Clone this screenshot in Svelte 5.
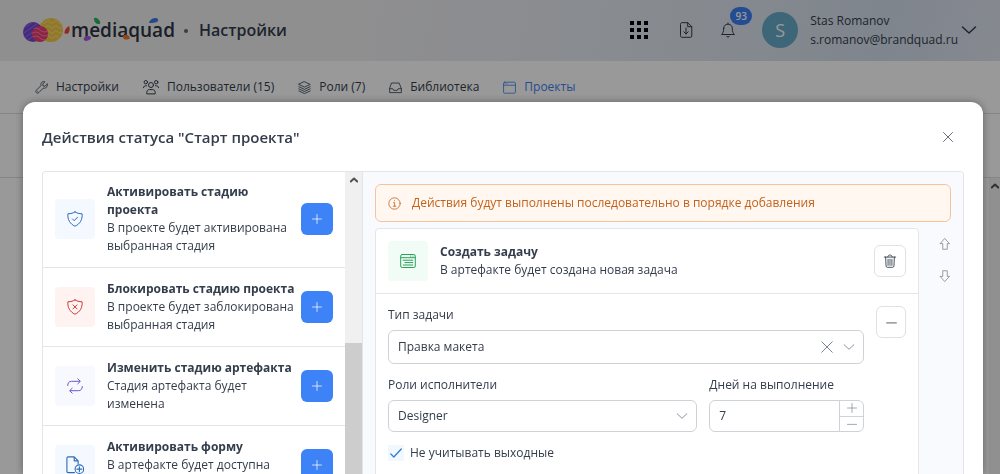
<script lang="ts">
  type Tab = { icon: string; label: string; active?: boolean }
  type Action = { icon: string; tone: string; title: string; text: string }

  const tabs: Tab[] = [
    { icon: 'wrench', label: 'Настройки' },
    { icon: 'users', label: 'Пользователи (15)' },
    { icon: 'layers', label: 'Роли (7)' },
    { icon: 'inbox', label: 'Библиотека' },
    { icon: 'window', label: 'Проекты', active: true },
  ]

  const actions: Action[] = [
    {
      icon: 'shield-check',
      tone: 'blue',
      title: 'Активировать стадию проекта',
      text: 'В проекте будет активирована выбранная стадия',
    },
    {
      icon: 'shield-cross',
      tone: 'red',
      title: 'Блокировать стадию проекта',
      text: 'В проекте будет заблокирована выбранная стадия',
    },
    {
      icon: 'repeat',
      tone: 'violet',
      title: 'Изменить стадию артефакта',
      text: 'Стадия артефакта будет изменена',
    },
    {
      icon: 'file-plus',
      tone: 'blue',
      title: 'Активировать форму',
      text: 'В артефакте будет доступна',
    },
  ]

  let taskType = $state('Правка макета')
  let role = $state('Designer')
  let days = $state(7)
  let skipWeekends = $state(true)
</script>

{#snippet icon(name: string, size = 16)}
  <svg
    width={size}
    height={size}
    viewBox="0 0 16 16"
    fill="none"
    stroke="currentColor"
    stroke-linecap="round"
    stroke-linejoin="round"
    aria-hidden="true"
  >
    {#if name === 'wrench'}
      <path d="M15 3.800 12.400 6.400 9.900 6.100 9.600 3.600 12.200 1C9.500 0 6.500 2.200 7.300 5.700L1.600 11.400C-.2 13.500 2.500 16.200 4.600 14.400L10.300 8.700C13.800 9.500 16 6.500 15 3.800Z" />
      <path d="M3.300 12.600v.2" />
    {:else if name === 'users'}
      <circle cx="2.800" cy="3.200" r="1.700" />
      <circle cx="13.200" cy="3.200" r="1.700" />
      <circle cx="8" cy="6" r="2.500" />
      <path d="M3.800 14.500v-1.200c0-1.600 1.100-2.700 2.500-2.700h3.400c1.400 0 2.500 1.100 2.500 2.700v1.200ZM.5 8.700C.5 7.300 1.500 6.700 3.500 6.700M15.500 8.700c0-1.400-1-2-3-2" />
    {:else if name === 'layers'}
      <path d="m8 .9 7 3.300-7 3.300-7-3.300ZM1 7l7 3.300L15 7M1 9.600l7 3.300 7-3.300M1 12.200l7 3.300 7-3.300" />
    {:else if name === 'inbox'}
      <path d="M3.500 2.500h9l2.700 7v4.800H.8V9.500ZM.8 9.500h3.800l1.200 2h4.400l1.200-2h3.800" />
    {:else if name === 'window'}
      <rect x=".7" y="1.500" width="14.600" height="13.500" rx="1.200" />
      <path d="M.7 5.200h14.600M2.800 3.400h.1M5 3.400h.1" />
    {:else if name === 'download'}
      <path d="M2.500 2c0-.8.5-1.300 1.300-1.300h6l4 4V14c0 .8-.5 1.300-1.300 1.300H3.800c-.8 0-1.300-.5-1.300-1.300ZM9.700.7v4h4M8 6v6M5.800 9.800 8 12l2.200-2.200" />
    {:else if name === 'bell'}
      <path d="M8 1v1M3.700 6.300C3.700 3.800 5.500 2.200 8 2.200s4.300 1.600 4.300 4.100c0 3.500.7 4.700 2.200 6.200h-13c1.500-1.500 2.200-2.700 2.200-6.200ZM6.700 14.300c.5 1.200 2.100 1.200 2.600 0" />
    {:else if name === 'chevron'}
      <path d="m1.500 5 6.500 6 6.500-6" />
    {:else if name === 'close'}
      <path d="m2 2 12 12M14 2 2 14" />
    {:else if name === 'plus'}
      <path d="M8 2v12M2 8h12" />
    {:else if name === 'minus'}
      <path d="M2 8.500h12" />
    {:else if name === 'shield-check' || name === 'shield-cross'}
      <path d="M8 .9C6.500 2 3.800 2.800.9 2.800.4 8.500 3 13.100 8 15.200c5-2.100 7.600-6.700 7.100-12.400C12.200 2.800 9.500 2 8 .9Z" />
      {#if name === 'shield-check'}
        <path d="m5.500 8 1.700 1.700 3.300-3.500" />
      {:else}
        <path d="m6 5.900 4 4M10 5.900l-4 4" />
      {/if}
    {:else if name === 'repeat'}
      <path d="M.7 7.500C.7 5 2 3.300 4.500 3.300h8.300M10.800.8l2.500 2.500-2.500 2.500M15.300 8.500c0 2.500-1.300 4.200-3.800 4.200H3.200M5.200 10.200l-2.500 2.500 2.500 2.500" />
    {:else if name === 'file-plus'}
      <path d="M7.500 14.800H2c-.7 0-1.200-.5-1.200-1.200V2C.8 1.300 1.300.8 2 .8h5.300l3.500 3.500v2.500M7.300.8v3.500h3.500M11.900 9.500v4.400M9.700 11.700h4.400" />
      <circle cx="11.900" cy="11.700" r="3.800" />
    {:else if name === 'task'}
      <rect x=".7" y="1.500" width="14.600" height="13" rx="1.500" />
      <path d="M.7 4.700h14.600M10.500 3.100h.3M12.800 3.100h.3M3.200 7.200h9.600M5 9.600h7.800M3.200 12h9.600" />
    {:else if name === 'info'}
      <circle cx="8" cy="8" r="7" />
      <path d="M6.800 7h1.400v4.300M6.500 11.300h3.200M8 4.500v.2" />
    {:else if name === 'trash'}
      <path d="M1.500 3.500h13M5.500 3.300c0-3 5-3 5 0M3 3.500l.5 10.300c0 .8.600 1.400 1.400 1.400h6.200c.8 0 1.400-.6 1.400-1.400L13 3.500M5.800 6v7M8 6v7M10.200 6v7" />
    {:else if name === 'up'}
      <path d="M8 1 14 7.500h-3V15H5V7.500H2Z" />
    {:else if name === 'down'}
      <path d="m8 15 6-6.500h-3V1H5v7.500H2Z" />
    {:else if name === 'check'}
      <path stroke-width="1.500" d="m2 9 3.500 3.500L14 3.500" />
    {/if}
  </svg>
{/snippet}

<div class="page">
  <header>
    <a class="brand" href="#home" aria-label="mediaquad">
      <svg class="balls" width="40" height="26" viewBox="0 0 40 26" aria-hidden="true">
        <defs>
          <clipPath id="ball-a"><circle cx="10" cy="15" r="10" /></clipPath>
          <clipPath id="ball-b"><circle cx="28" cy="13" r="12" /></clipPath>
          <clipPath id="ball-c"><circle cx="17" cy="17" r="8" /></clipPath>
        </defs>
        <g clip-path="url(#ball-b)">
          <path fill="#f3c846" d="M14 0h26v26H14z" />
          <path
            fill="none"
            stroke="#ffe37a"
            d="M15 5q2-3 4 0t4 0 4 0 4 0 4 0 4 0M15 10q2-3 4 0t4 0 4 0 4 0 4 0 4 0M15 15q2-3 4 0t4 0 4 0 4 0 4 0 4 0M15 20q2-3 4 0t4 0 4 0 4 0 4 0 4 0"
          />
        </g>
        <g clip-path="url(#ball-a)">
          <path fill="#7448cf" d="M0 4h20v22H0z" />
          <path stroke="#9a70ea" d="m-2 13 16-11M-2 18 18 4M-2 23 20 8M2 25l18-13" />
        </g>
        <g clip-path="url(#ball-c)">
          <path fill="#e83c73" d="M8 8h18v18H8z" />
          <path
            fill="none"
            stroke="#ff86a6"
            d="M8 13q5-4 9 0t9 0M8 17q5-4 9 0t9 0M8 21q5-4 9 0t9 0"
          />
        </g>
      </svg>
      <span class="wordmark">
        mediaquad
        <svg width="110" height="26" viewBox="0 0 110 26" aria-hidden="true">
          <path fill="#ef4a3c" d="M5 9c1 2 1 5-.5 7-1.500 1.500-4.500 1-4-1C1 12 3 10 5 9Z" />
          <path fill="#22b45a" d="M30 2c0-2 3-1.500 5 1s1.500 4-.5 4S30 5 30 2Z" />
          <path fill="#a35be0" d="M20 23c-1-2 1-4 4-4s4 2 2 3.500-5 2-6 .5Z" />
          <path fill="#f0781e" d="M59 20c0-2 2-2.500 4-2s4 3 2 4-6 1-6-2Z" />
          <path fill="#3a7be8" d="M85 6c0-2 3-5 6-5s4 2 2.500 3.500S88 6 85 6Z" />
        </svg>
      </span>
    </a>
    <span class="sep"></span>
    <h1>Настройки</h1>

    <div class="tools">
      <button class="apps" aria-label="Приложения">
        {#each { length: 9 } as _, i (i)}
          <i></i>
        {/each}
      </button>
      <button aria-label="Загрузки">{@render icon('download')}</button>
      <button class="bell" aria-label="Уведомления">
        {@render icon('bell')}
        <span class="badge">93</span>
      </button>
      <button class="user">
        <span class="avatar">S</span>
        <span class="who">Stas Romanov<br />s.romanov@brandquad.ru</span>
        {@render icon('chevron')}
      </button>
    </div>
  </header>

  <nav>
    {#each tabs as tab (tab.label)}
      <a href="#{tab.icon}" class:active={tab.active}>
        {@render icon(tab.icon, tab.icon === 'users' ? 16 : 13)}
        {tab.label}
      </a>
    {/each}
  </nav>
  <div class="subbar"></div>
  <div class="content">
    <div class="scrollbar"><span class="arrow">{@render icon('chevron', 8)}</span></div>
  </div>
</div>

<div class="backdrop">
  <div class="modal" role="dialog" aria-modal="true" aria-labelledby="modal-title">
    <div class="modal-head">
      <h2 id="modal-title">Действия статуса "Старт проекта"</h2>
      <button class="close" aria-label="Закрыть">{@render icon('close', 12)}</button>
    </div>

    <div class="panels">
      <div class="list">
        <ul>
          {#each actions as action (action.title)}
            <li>
              <span class="tile {action.tone}">{@render icon(action.icon, action.icon === 'file-plus' ? 18 : 16)}</span>
              <p><b>{action.title}</b><br />{action.text}</p>
              <button class="add" aria-label="Добавить: {action.title}">{@render icon('plus', 12)}</button>
            </li>
          {/each}
        </ul>
        <div class="scrollbar">
          <span class="arrow">{@render icon('chevron', 8)}</span>
          <span class="thumb"></span>
        </div>
      </div>

      <div class="flow">
        <div class="alert">
          {@render icon('info', 13)}
          Действия будут выполнены последовательно в порядке добавления
        </div>

        <div class="step">
          <section class="card">
            <div class="card-head">
              <span class="tile green">{@render icon('task')}</span>
              <p><b>Создать задачу</b><br />В артефакте будет создана новая задача</p>
              <button class="square" aria-label="Удалить">{@render icon('trash', 14)}</button>
            </div>

            <div class="card-body">
              <div class="fields">
                <div class="field">
                  <label for="task-type">Тип задачи</label>
                  <div class="select tall">
                    <select id="task-type" bind:value={taskType}>
                      <option>Правка макета</option>
                    </select>
                    <span class="marks">
                      <button aria-label="Очистить">{@render icon('close', 14)}</button>
                      {@render icon('chevron', 12)}
                    </span>
                  </div>
                </div>

                <div class="pair">
                  <div class="field">
                    <label for="role">Роли исполнители</label>
                    <div class="select">
                      <select id="role" bind:value={role}>
                        <option>Designer</option>
                      </select>
                      <span class="marks">{@render icon('chevron', 12)}</span>
                    </div>
                  </div>
                  <div class="field">
                    <label for="days">Дней на выполнение</label>
                    <div class="number">
                      <input id="days" type="number" min="0" bind:value={days} />
                      <div class="spin">
                        <button aria-label="Больше" onclick={() => days++}>{@render icon('plus', 12)}</button>
                        <button aria-label="Меньше" onclick={() => days--}>{@render icon('minus', 12)}</button>
                      </div>
                    </div>
                  </div>
                </div>

                <label class="check">
                  <span class="box">
                    <input type="checkbox" bind:checked={skipWeekends} />
                    {#if skipWeekends}{@render icon('check', 14)}{/if}
                  </span>
                  Не учитывать выходные
                </label>
              </div>
              <button class="square narrow" aria-label="Свернуть">{@render icon('minus', 13)}</button>
            </div>
          </section>

          <div class="order">
            <button aria-label="Выше">{@render icon('up', 12)}</button>
            <button aria-label="Ниже">{@render icon('down', 12)}</button>
          </div>
        </div>
      </div>
    </div>
  </div>
</div>

<style>
  :global(body) {
    font-family: 'Open Sans', 'Noto Sans', sans-serif;
    font-size: 12px;
    line-height: 18px;
    color: #333d4b;
  }

  * {
    box-sizing: border-box;
  }

  h1,
  h2,
  p,
  ul {
    margin: 0;
    padding: 0;
  }

  button {
    display: flex;
    align-items: center;
    justify-content: center;
    padding: 0;
    border: 0;
    background: none;
    color: inherit;
    font: inherit;
    cursor: pointer;
  }

  svg {
    flex: none;
    display: block;
  }

  a {
    color: inherit;
    text-decoration: none;
  }

  /* Page under the dialog */
  .page {
    display: flex;
    flex-direction: column;
    height: 100vh;
    overflow: hidden;
    background: #fff;
  }

  header {
    display: flex;
    align-items: center;
    height: 61px;
    flex: none;
    padding: 0 23px 2px;
    background: linear-gradient(100deg, #f1eff0 0%, #efeef1 35%, #e6eaf1 55%, #dde4ee 75%, #d4deec 88%, #dfe4ef 100%);
  }

  .brand {
    display: flex;
    align-items: center;
    gap: 1px;
  }

  .wordmark {
    position: relative;
    padding-left: 7px;
    font-size: 19px;
    font-weight: 600;
    line-height: 26px;
    color: #2c3442;
  }
  .wordmark svg {
    position: absolute;
    top: 0;
    left: 0;
  }

  .sep {
    width: 4px;
    height: 4px;
    margin: 2px 11px 0 9px;
    border-radius: 50%;
    background: #5c6675;
  }

  h1 {
    font-size: 16px;
    font-weight: 600;
    line-height: 24px;
  }

  .tools {
    display: flex;
    align-items: center;
    gap: 30px;
    margin-left: auto;
  }

  .apps {
    display: grid;
    grid-template-columns: repeat(3, 4px);
    gap: 3px;
  }
  .apps i {
    width: 4px;
    height: 4px;
    background: #000;
  }

  .bell {
    position: relative;
    margin-left: -4px;
  }
  .badge {
    position: absolute;
    left: 10px;
    bottom: 13px;
    width: 22px;
    height: 18px;
    border-radius: 9px;
    background: #3b7ff5;
    color: #fff;
    font-size: 10px;
    font-weight: 600;
  }

  .user {
    gap: 12px;
    margin-left: -4px;
  }
  .user > :global(svg) {
    margin-left: -9px;
    stroke-width: 1.5;
  }
  .avatar {
    width: 36px;
    height: 36px;
    border-radius: 50%;
    background: #66abc8;
    color: #fff;
    font-size: 18px;
    line-height: 36px;
  }
  .who {
    line-height: 19px;
    text-align: left;
  }

  nav {
    display: flex;
    align-items: center;
    gap: 24px;
    flex: none;
    height: 53px;
    padding-left: 35px;
    border-bottom: 1px solid #dcdfe4;
  }
  nav a {
    display: flex;
    align-items: center;
    gap: 8px;
    white-space: nowrap;
  }
  nav a.active {
    color: #3f7ff0;
  }

  .subbar {
    flex: none;
    height: 64px;
    border-bottom: 1px solid #dcdfe4;
  }

  .content {
    display: flex;
    justify-content: flex-end;
    flex: 1;
    background: #fff;
  }

  .scrollbar {
    display: flex;
    flex-direction: column;
    align-items: center;
    flex: none;
    width: 17px;
    background: #f0f0f0;
    color: #505050;
  }
  .content .scrollbar {
    width: 11px;
  }
  .arrow {
    display: flex;
    align-items: center;
    height: 17px;
    transform: rotate(180deg);
  }
  .arrow :global(svg) {
    stroke-width: 4;
  }

  /* Dialog */
  .backdrop {
    position: fixed;
    inset: 0;
    display: flex;
    padding: 102px 17px 0 23px;
    overflow: hidden;
    background: rgb(0 0 0 / 40%);
  }

  .modal {
    display: flex;
    flex-direction: column;
    flex: 1;
    min-width: 0;
    padding: 0 19px;
    border-radius: 12px 12px 0 0;
    background: #fff;
    box-shadow: 0 0 8px rgb(0 0 0 / 35%);
  }

  .modal-head {
    display: flex;
    align-items: center;
    justify-content: space-between;
    flex: none;
    height: 69px;
    padding-right: 10px;
  }
  h2 {
    font-size: 15px;
    font-weight: 600;
    line-height: 24px;
  }

  .panels {
    display: flex;
    flex: 1;
    min-height: 0;
    overflow: hidden;
    border: 1px solid #e3e5e9;
    border-bottom: 0;
    border-radius: 4px 4px 0 0;
  }

  .list {
    display: flex;
    flex: none;
    width: 320px;
    border-right: 1px solid #e3e5e9;
  }
  .list ul {
    flex: 1;
    margin-top: -1px;
    list-style: none;
  }
  .list li {
    display: flex;
    align-items: center;
    gap: 12px;
    min-height: 79px;
    padding: 12px;
    border-bottom: 1px solid #e3e5e9;
  }
  .list p {
    flex: 1;
    align-self: flex-start;
    margin-right: -12px;
  }
  .thumb {
    flex: 1;
    width: 100%;
    margin-top: 154px;
    background: #cdcdcd;
  }

  .tile {
    display: flex;
    align-items: center;
    justify-content: center;
    flex: none;
    width: 40px;
    height: 40px;
    border-radius: 4px;
  }
  .blue {
    background: #f4f9ff;
    color: #2f6bbd;
  }
  .red {
    background: #fff3f2;
    color: #cc3a3a;
  }
  .violet {
    background: #f8f8ff;
    color: #6a5cc4;
  }
  .green {
    background: #f2fcf6;
    color: #2ba05a;
  }

  .add {
    flex: none;
    width: 32px;
    height: 32px;
    border-radius: 6px;
    background: #3d82f6;
    color: #fff;
  }

  .flow {
    flex: 1;
    min-width: 0;
    padding: 12px 12px 0;
    background: #f9fafd;
  }

  .alert {
    display: flex;
    align-items: center;
    gap: 11px;
    height: 38px;
    padding: 0 12px;
    border: 1px solid #f5c49b;
    border-radius: 6px;
    background: #fff7f0;
    color: #c2621c;
  }

  .step {
    display: flex;
    gap: 20px;
    margin-top: 6px;
  }

  .card {
    flex: 1;
    min-width: 0;
    height: 300px;
    border: 1px solid #e3e5e9;
    border-radius: 4px;
    background: #fff;
  }

  .card-head {
    display: flex;
    align-items: center;
    gap: 12px;
    padding: 12px;
    border-bottom: 1px solid #e3e5e9;
  }
  .card-head p {
    flex: 1;
  }

  .square {
    flex: none;
    width: 32px;
    height: 32px;
    border: 1px solid #dfe1e5;
    border-radius: 6px;
    background: #fff;
  }
  .narrow {
    width: 30px;
  }

  .card-body {
    display: flex;
    align-items: flex-start;
    gap: 12px;
    padding: 12px;
  }

  .fields {
    display: flex;
    flex-direction: column;
    flex: 1;
    gap: 12px;
    min-width: 0;
  }

  .field {
    display: flex;
    flex-direction: column;
    gap: 6px;
    min-width: 0;
  }

  .pair {
    display: grid;
    grid-template-columns: 2fr 1fr;
    gap: 12px;
  }

  .select {
    display: grid;
    align-items: center;
    height: 32px;
  }
  .select.tall {
    height: 34px;
  }
  .select select {
    grid-area: 1 / 1;
    appearance: none;
    width: 100%;
    height: 100%;
    padding: 0 9px;
    border: 1px solid #cfd2d6;
    border-radius: 6px;
    background: #fff;
    color: inherit;
    font: inherit;
  }
  .marks {
    grid-area: 1 / 1;
    justify-self: end;
    display: flex;
    align-items: center;
    gap: 9px;
    padding-right: 9px;
    color: #667080;
  }

  .number {
    display: flex;
    height: 32px;
    overflow: hidden;
    border: 1px solid #cfd2d6;
    border-radius: 6px;
    background: #fff;
  }
  .number input {
    appearance: textfield;
    flex: 1;
    min-width: 0;
    padding: 0 9px;
    border: 0;
    background: none;
    color: inherit;
    font: inherit;
  }
  .number input::-webkit-inner-spin-button {
    appearance: none;
  }
  .spin {
    display: flex;
    flex-direction: column;
    width: 24px;
    border-left: 1px solid #cfd2d6;
    color: #858c96;
  }
  .spin button {
    flex: 1;
  }
  .spin button + button {
    border-top: 1px solid #cfd2d6;
  }

  .check {
    display: flex;
    align-items: center;
    gap: 6px;
  }
  .box {
    display: grid;
    place-items: center;
    width: 16px;
    height: 16px;
    color: #2f7fd0;
  }
  .box > :global(*) {
    grid-area: 1 / 1;
  }
  .box input {
    appearance: none;
    width: 16px;
    height: 16px;
    margin: 0;
    background: #f2f8ff;
  }
  .box > :global(svg) {
    pointer-events: none;
  }

  .order {
    display: flex;
    flex-direction: column;
    gap: 20px;
    padding-top: 10px;
    color: #777e88;
  }
</style>
